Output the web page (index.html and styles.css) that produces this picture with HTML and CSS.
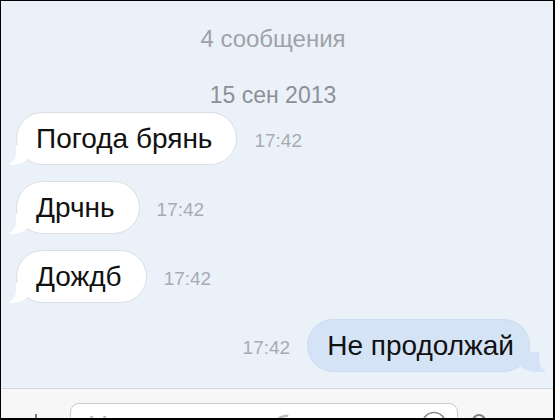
FILE: index.html
```html
<!DOCTYPE html>
<html lang="ru">
<head>
  <meta charset="UTF-8" />
  <title>Сообщения</title>
  <link rel="stylesheet" href="styles.css">
</head>
<body>
  <div class="screen">
    <div class="chat">
      <div class="meta count">4 сообщения</div>
      <div class="meta date">15 сен 2013</div>

      <div class="row in">
        <div class="bubble">Погода брянь</div>
        <span class="time">17:42</span>
      </div>
      <div class="row in">
        <div class="bubble">Дрчнь</div>
        <span class="time">17:42</span>
      </div>
      <div class="row in">
        <div class="bubble">Дождб</div>
        <span class="time">17:42</span>
      </div>
      <div class="row out">
        <span class="time">17:42</span>
        <div class="bubble">Не продолжай</div>
      </div>
    </div>

    <div class="composer">
      <svg class="plus" width="24" height="24" viewBox="0 0 24 24">
        <path d="M12 1v22M1 12h22" stroke="#7d8186" stroke-width="2" fill="none"/>
      </svg>
      <div class="field">
        <span class="placeholder">Напишите сообщение</span>
        <svg class="smile" width="26" height="26" viewBox="0 0 26 26">
          <circle cx="13" cy="13" r="11.5" stroke="#8a8e94" stroke-width="1.6" fill="none"/>
        </svg>
      </div>
      <svg class="mic" width="16" height="24" viewBox="0 0 16 24">
        <rect x="2" y="1" width="12" height="20" rx="6" stroke="#7d8186" stroke-width="2" fill="none"/>
      </svg>
    </div>
  </div>
</body>
</html>
```

FILE: styles.css
```css
body {
  margin: 0;
  background: #000;
  font-family: 'Liberation Sans', Arial, sans-serif;
}

.screen {
  width: 555px;
  height: 420px;
  box-sizing: border-box;
  border-style: solid;
  border-color: #000;
  border-width: 1px 2px 2px 1px;
  background: #ebf1f9;
  display: flex;
  flex-direction: column;
  overflow: hidden;
}

.chat {
  flex: 1;
  padding: 24px 23px 0 15px;
}

.meta {
  text-align: center;
  line-height: 28px;
}

.count {
  font-size: 24px;
  color: #9ea2a9;
}

.date {
  margin-top: 28px;
  margin-bottom: 3px;
  font-size: 23px;
  color: #8c9096;
}

.row {
  display: flex;
  align-items: center;
  gap: 17px;
  margin-bottom: 16px;
}

.row.out {
  justify-content: flex-end;
}

.bubble {
  position: relative;
  height: 53px;
  box-sizing: border-box;
  line-height: 51px;
  font-size: 28px;
  color: #111;
  border-radius: 27px;
  white-space: nowrap;
}

.in .bubble {
  background: #fff;
  border: 1px solid #dadee4;
  padding: 0 24px 0 19px;
}

.out .bubble {
  background: #d4e3f6;
  border: 1px solid #cbdbf0;
  padding: 0 15px 0 19px;
}

/* bubble tails */
.bubble::before,
.bubble::after {
  content: "";
  position: absolute;
  bottom: -1px;
  height: 20px;
}

.in .bubble::before {
  left: -8px;
  width: 22px;
  background: #fff;
  border-bottom-right-radius: 18px 15px;
}

.in .bubble::after {
  left: -27px;
  width: 26px;
  background: #ebf1f9;
  border-bottom-right-radius: 12px;
}

.out .bubble::before {
  right: -16px;
  width: 30px;
  background: #d4e3f6;
  border-bottom-left-radius: 22px 16px;
}

.out .bubble::after {
  right: -36px;
  width: 26px;
  background: #ebf1f9;
  border-bottom-left-radius: 12px;
}

.time {
  margin-top: 5px;
  font-size: 19px;
  color: #a7acb4;
}

.composer {
  height: 31px;
  flex-shrink: 0;
  box-sizing: border-box;
  border-top: 1px solid #d3d6db;
  background: #f7f7f8;
  display: flex;
  align-items: flex-start;
  padding: 14px 0 0 23px;
}

.plus {
  margin-top: 10px;
}

.field {
  margin-left: 22px;
  width: 388px;
  height: 36px;
  flex-shrink: 0;
  box-sizing: border-box;
  border: 1px solid #c9cbd0;
  border-radius: 9px;
  background: #fff;
  display: flex;
  align-items: flex-start;
  padding: 7px 10px 0 17px;
}

.placeholder {
  flex: 1;
  font-size: 28px;
  line-height: 30px;
  color: #b9bcc2;
  white-space: nowrap;
  overflow: hidden;
}

.mic {
  margin: 11px 0 0 13px;
}
```
